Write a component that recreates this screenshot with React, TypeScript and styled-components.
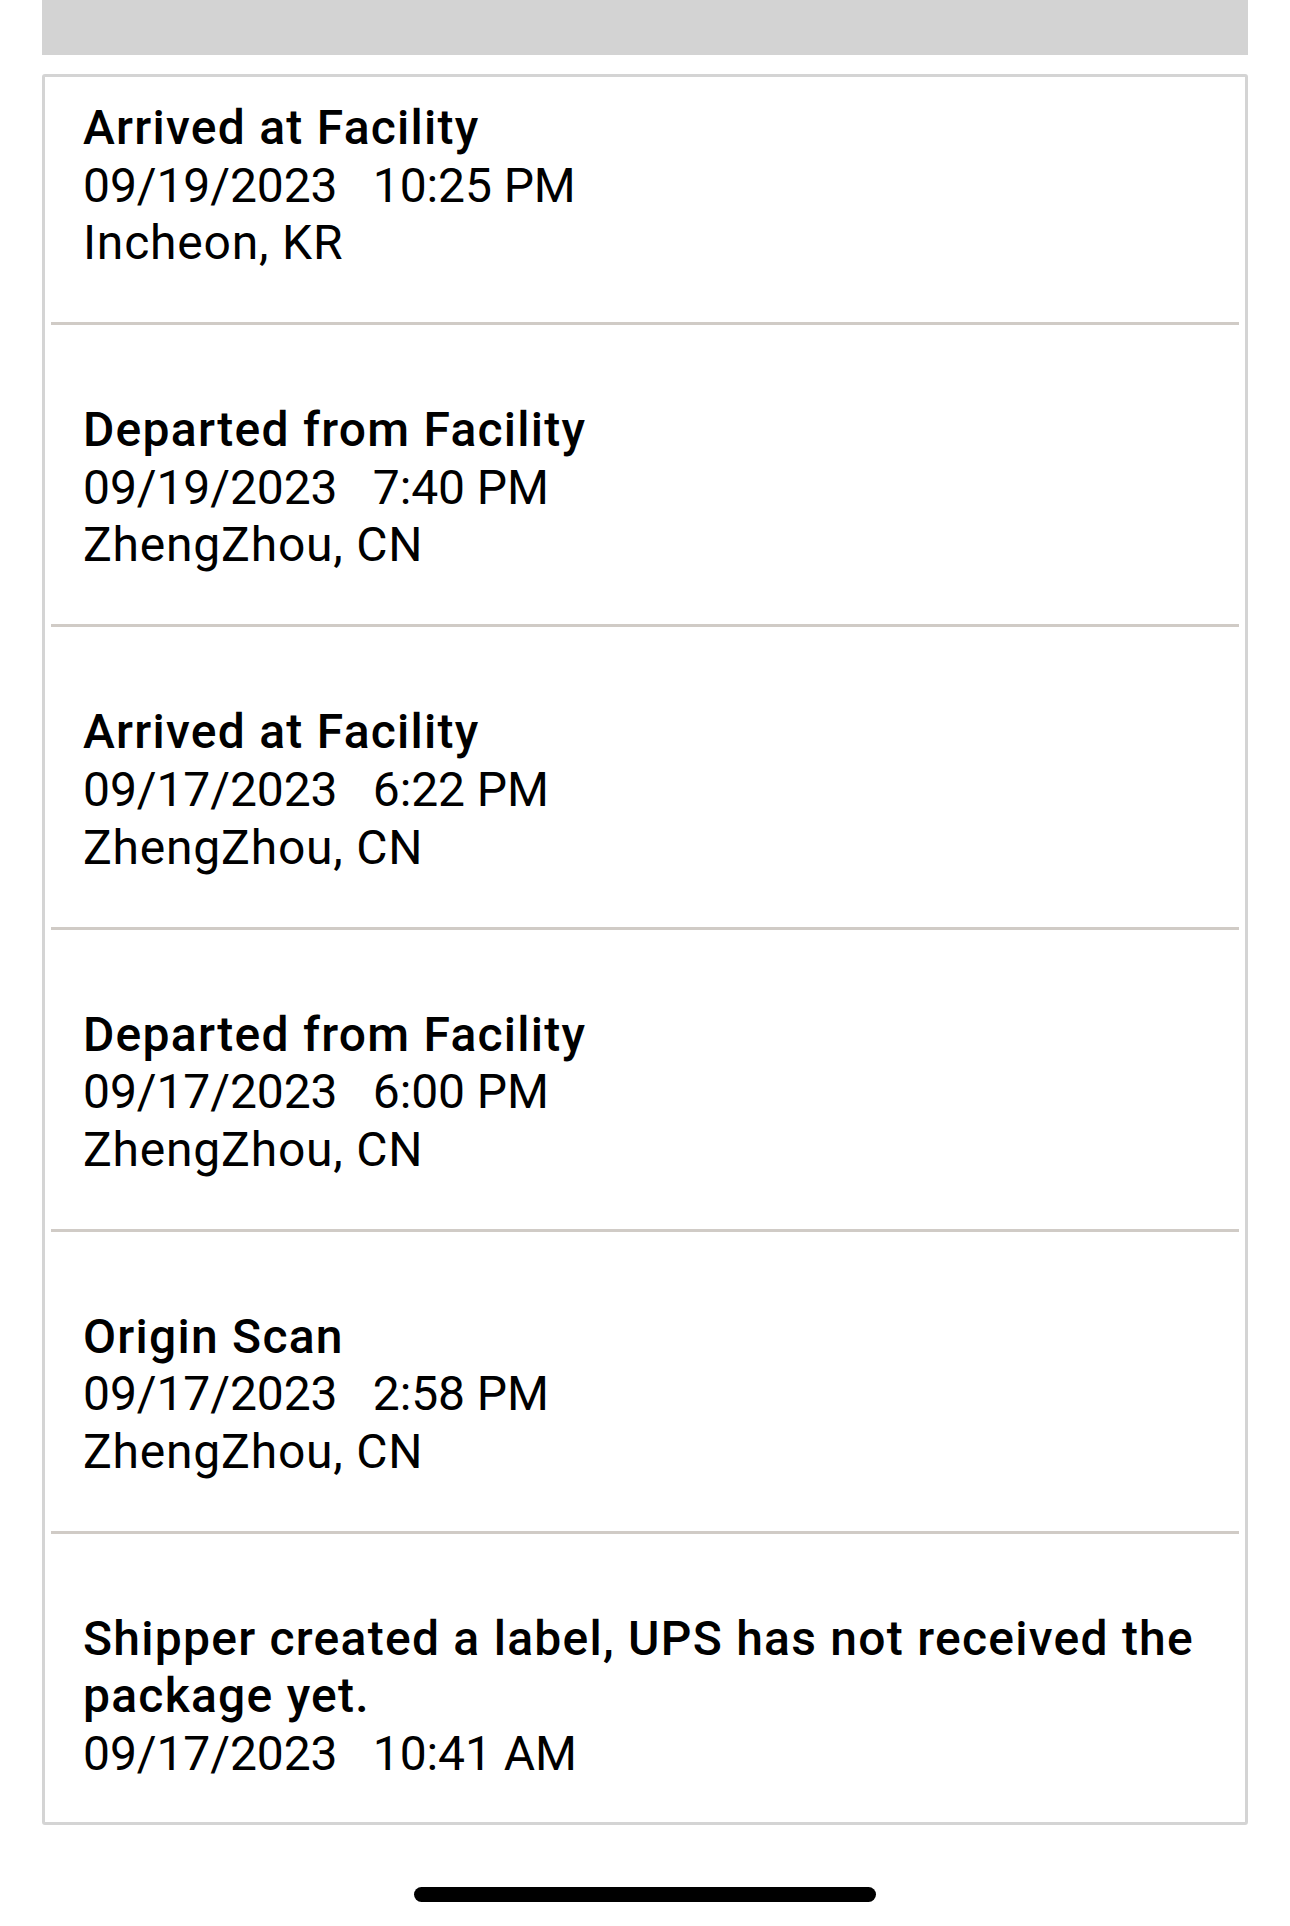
import React from "react";
import styled, { createGlobalStyle } from "styled-components";

const GlobalStyle = createGlobalStyle`
  html, body {
    margin: 0;
    padding: 0;
    background: #ffffff;
  }
  body {
    font-family: Roboto, "Liberation Sans", Arial, sans-serif;
    color: #000000;
  }
`;

const Page = styled.div`
  width: 1290px;
  height: 1926px;
  box-sizing: border-box;
  padding: 0 42px;
  display: flex;
  flex-direction: column;
  background: #ffffff;
`;

const TopBar = styled.div`
  height: 55px;
  background: #d3d3d3;
  flex-shrink: 0;
`;

const Card = styled.section`
  margin-top: 19px;
  border: 3px solid #d4d4d4;
  border-radius: 3px;
  padding: 0 6px;
  display: flex;
  flex-direction: column;
`;

const Item = styled.div`
  padding: 76px 32px 50.4px;
  border-bottom: 3px solid #d0cbc6;
  display: flex;
  flex-direction: column;
  font-size: 48px;
  line-height: 57.6px;

  &:first-child {
    padding-top: 22px;
  }
  &:last-child {
    border-bottom: none;
    padding-bottom: 39px;
  }
`;

const Status = styled.div`
  font-weight: 500;
  letter-spacing: 1.25px;
`;

const DateLine = styled.div`
  font-weight: 400;
  white-space: pre;
  letter-spacing: -0.1px;
`;

const Place = styled.div`
  font-weight: 400;
  letter-spacing: 0.8px;
`;

const HomeArea = styled.div`
  flex: 1;
  display: flex;
  align-items: flex-end;
  justify-content: center;
  padding-bottom: 24px;
`;

const HomeIndicator = styled.div`
  width: 462px;
  height: 15px;
  border-radius: 8px;
  background: #000000;
`;

type Event = {
  status: string;
  date: string;
  time: string;
  location?: string;
};

const events: Event[] = [
  { status: "Arrived at Facility", date: "09/19/2023", time: "10:25 PM", location: "Incheon, KR" },
  { status: "Departed from Facility", date: "09/19/2023", time: "7:40 PM", location: "ZhengZhou, CN" },
  { status: "Arrived at Facility", date: "09/17/2023", time: "6:22 PM", location: "ZhengZhou, CN" },
  { status: "Departed from Facility", date: "09/17/2023", time: "6:00 PM", location: "ZhengZhou, CN" },
  { status: "Origin Scan", date: "09/17/2023", time: "2:58 PM", location: "ZhengZhou, CN" },
  { status: "Shipper created a label, UPS has not received the package yet.", date: "09/17/2023", time: "10:41 AM" },
];

export default function App() {
  return (
    <>
      <GlobalStyle />
      <Page>
        <TopBar />
        <Card>
          {events.map((e, i) => (
            <Item key={i}>
              <Status>{e.status}</Status>
              <DateLine>{`${e.date}   ${e.time}`}</DateLine>
              {e.location && <Place>{e.location}</Place>}
            </Item>
          ))}
        </Card>
        <HomeArea>
          <HomeIndicator />
        </HomeArea>
      </Page>
    </>
  );
}
